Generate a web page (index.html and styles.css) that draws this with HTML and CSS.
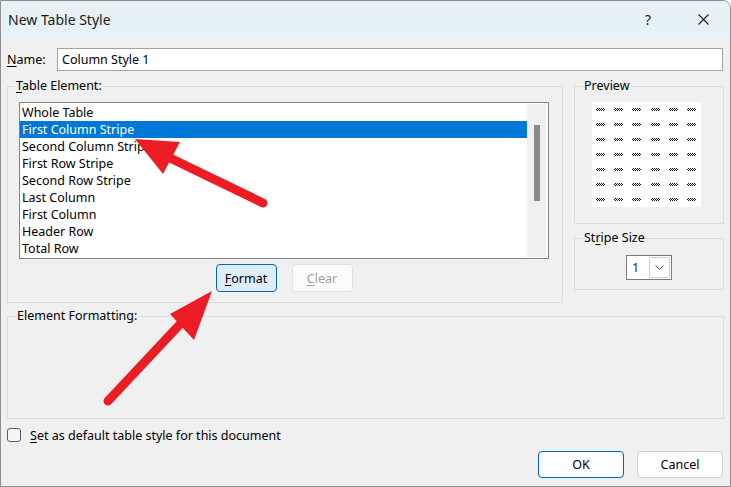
FILE: index.html
```html
<!DOCTYPE html>
<html lang="en">
<head>
    <meta charset="utf-8">
    <title>New Table Style</title>
    <link rel="stylesheet" href="styles.css">
</head>
<body>
    <div class="window">
        <div class="titlebar">
            <span class="title">New Table Style</span>
            <span class="help">?</span>
            <span class="close">
                <svg width="11" height="11" viewBox="0 0 11 11"><path d="M0.5 0.5 L10.5 10.5 M10.5 0.5 L0.5 10.5" stroke="#1f1f1f" stroke-width="1.1" fill="none"/></svg>
            </span>
        </div>

        <div class="content">
            <div class="name-row">
                <label class="name-label"><u>N</u>ame:</label>
                <input class="name-input" type="text" value="Column Style 1">
            </div>

            <div class="main">
                <fieldset class="group table-element">
                    <legend><u>T</u>able Element:</legend>
                    <div class="listbox">
                        <ul class="items">
                            <li>Whole Table</li>
                            <li class="selected">First Column Stripe</li>
                            <li>Second Column Stripe</li>
                            <li>First Row Stripe</li>
                            <li>Second Row Stripe</li>
                            <li>Last Column</li>
                            <li>First Column</li>
                            <li>Header Row</li>
                            <li>Total Row</li>
                        </ul>
                        <div class="scrollbar"><div class="thumb"></div></div>
                    </div>
                    <div class="list-buttons">
                        <button class="btn format"><u>F</u>ormat</button>
                        <button class="btn clear" disabled><u>C</u>lear</button>
                    </div>
                </fieldset>

                <div class="side">
                    <fieldset class="group preview">
                        <legend>Preview</legend>
                        <div class="preview-box">
                            <span class="dash"></span><span class="dash"></span><span class="dash"></span><span class="dash"></span><span class="dash"></span><span class="dash"></span>
                            <span class="dash"></span><span class="dash"></span><span class="dash"></span><span class="dash"></span><span class="dash"></span><span class="dash"></span>
                            <span class="dash"></span><span class="dash"></span><span class="dash"></span><span class="dash"></span><span class="dash"></span><span class="dash"></span>
                            <span class="dash"></span><span class="dash"></span><span class="dash"></span><span class="dash"></span><span class="dash"></span><span class="dash"></span>
                            <span class="dash"></span><span class="dash"></span><span class="dash"></span><span class="dash"></span><span class="dash"></span><span class="dash"></span>
                            <span class="dash"></span><span class="dash"></span><span class="dash"></span><span class="dash"></span><span class="dash"></span><span class="dash"></span>
                            <span class="dash"></span><span class="dash"></span><span class="dash"></span><span class="dash"></span><span class="dash"></span><span class="dash"></span>
                        </div>
                    </fieldset>

                    <fieldset class="group stripe">
                        <legend>St<u>r</u>ipe Size</legend>
                        <div class="combo">
                            <span class="combo-value">1</span>
                            <span class="combo-arrow">
                                <svg width="9" height="5" viewBox="0 0 9 5"><polyline points="0.5,0.5 4.5,4.5 8.5,0.5" stroke="#555" stroke-width="1" fill="none"/></svg>
                            </span>
                        </div>
                    </fieldset>
                </div>
            </div>

            <fieldset class="group formatting">
                <legend>Element Formatting:</legend>
            </fieldset>

            <label class="check-row">
                <span class="checkbox"></span>
                <span><u>S</u>et as default table style for this document</span>
            </label>

            <div class="footer">
                <button class="btn ok">OK</button>
                <button class="btn cancel">Cancel</button>
            </div>
        </div>

        <!-- red annotation arrows -->
        <svg class="arrows" width="731" height="487" viewBox="0 0 731 487">
            <line x1="263" y1="203" x2="170" y2="158" stroke="#ed1c24" stroke-width="9" stroke-linecap="round"/>
            <polygon points="135,139 180,142 163,174" fill="#ed1c24"/>
            <line x1="108" y1="401" x2="184" y2="320" stroke="#ed1c24" stroke-width="9" stroke-linecap="round"/>
            <polygon points="212,291 170,314 194,340" fill="#ed1c24"/>
        </svg>
    </div>
</body>
</html>
```

FILE: styles.css
```css
* {
    box-sizing: border-box;
}

body {
    margin: 0;
    font-family: "Noto Sans", "Open Sans", sans-serif;
    font-size: 12.5px;
    color: #000;
    background: #fff;
}

u {
    text-decoration: underline;
    text-underline-offset: 2px;
}

.window {
    position: relative;
    width: 731px;
    height: 487px;
    background: #f0f0f0;
    border: 1px solid #8e8e8e;
    border-radius: 0 8px 0 0;
    overflow: hidden;
}

.titlebar {
    display: flex;
    align-items: center;
    height: 37px;
    background: #e6f2f6;
    padding-left: 7px;
}

.title {
    flex: 1;
    font-size: 14px;
    color: #1a1a1a;
}

.help {
    font-size: 14px;
    color: #1a1a1a;
    margin-right: 47px;
}

.close {
    display: flex;
    margin-right: 21px;
}

.content {
    padding: 10px 6px 0 6px;
}

.name-row {
    display: flex;
    align-items: center;
}

.name-label {
    width: 50px;
}

.name-input {
    width: 666px;
    height: 23px;
    border: 1px solid #a3a3a3;
    background: #fff;
    font: inherit;
    padding: 0 4px;
    outline: none;
}

.main {
    display: flex;
    gap: 11px;
    margin-top: 8px;
}

.group {
    margin: 0;
    min-width: 0;
    border: 1px solid #dcdcdc;
}

.group legend {
    font-size: 12.5px;
    line-height: 14px;
    padding: 0 1px;
}

.table-element {
    width: 556px;
    padding: 0 13px 10px 11px;
}

.table-element legend {
    margin-left: -4px;
}

.listbox {
    display: flex;
    width: 530px;
    height: 157px;
    margin-top: 9px;
    border: 1px solid #828282;
    background: #fff;
}

.items {
    flex: 1;
    list-style: none;
    margin: 0;
    padding: 1px 0 0 0;
}

.items li {
    height: 17px;
    line-height: 18px;
    padding-left: 2px;
    white-space: nowrap;
}

.items .selected {
    background: #0078d7;
    color: #fff;
}

.scrollbar {
    width: 20px;
    margin: 1px 1px 1px 0;
    background: #f0f0f0;
    padding: 21px 7px 0 7px;
}

.thumb {
    width: 6px;
    height: 76px;
    background: #8a8a8a;
}

.list-buttons {
    display: flex;
    justify-content: center;
    gap: 15px;
    margin-top: 5px;
}

.btn {
    font: inherit;
    height: 28px;
    width: 61px;
    padding: 0;
    border: 1px solid #d0d0d0;
    border-radius: 4px;
    background: #fdfdfd;
    color: #000;
}

.format {
    background: #e0edf9;
    border-color: #0067c0;
}

.clear {
    color: #a0a0a0;
    border-color: #e0e0e0;
    background: #fbfbfb;
}

.side {
    width: 150px;
}

.preview {
    width: 150px;
    padding: 0 0 16px 17px;
}

.preview legend {
    margin-left: -9px;
}

.preview-box {
    width: 109px;
    height: 105px;
    margin-top: 9px;
    padding: 6px 0 0 4px;
    background: #fff;
    display: grid;
    grid-template-columns: repeat(6, 9px);
    grid-auto-rows: 3px;
    column-gap: 9.2px;
    row-gap: 12px;
}

.dash {
    background: repeating-conic-gradient(#111 0 25%, #fff 0 50%) 0 0 / 2px 2px;
}

.stripe {
    width: 150px;
    margin-top: 7px;
    padding: 0 0 9px 0;
}

.stripe legend {
    margin-left: 8px;
}

.combo {
    display: flex;
    width: 46px;
    height: 25px;
    margin: 10px auto 0;
    border: 1px solid #7a7a7a;
    background: #fff;
}

.combo-value {
    flex: 1;
    line-height: 23px;
    padding-left: 5px;
    color: #1c2a6b;
}

.combo-arrow {
    width: 21px;
    margin: 1px 1px 1px 0;
    border: 1px solid #cfcfcf;
    border-radius: 2px;
    display: flex;
    align-items: center;
    justify-content: center;
}

.formatting {
    width: 717px;
    margin-top: 6px;
    padding: 0 0 95px 8px;
}

.check-row {
    display: flex;
    align-items: center;
    gap: 9px;
    margin-top: 9px;
    height: 14px;
}

.checkbox {
    width: 14px;
    height: 14px;
    border: 1px solid #5c5c5c;
    border-radius: 3px;
    background: #f6f6f6;
}

.footer {
    display: flex;
    justify-content: flex-end;
    gap: 13px;
    margin-top: 9px;
    padding-right: 1px;
}

.ok,
.cancel {
    width: 86px;
    height: 27px;
}

.ok {
    border-color: #0067c0;
}

.arrows {
    position: absolute;
    left: -1px;
    top: -1px;
    pointer-events: none;
}
```
